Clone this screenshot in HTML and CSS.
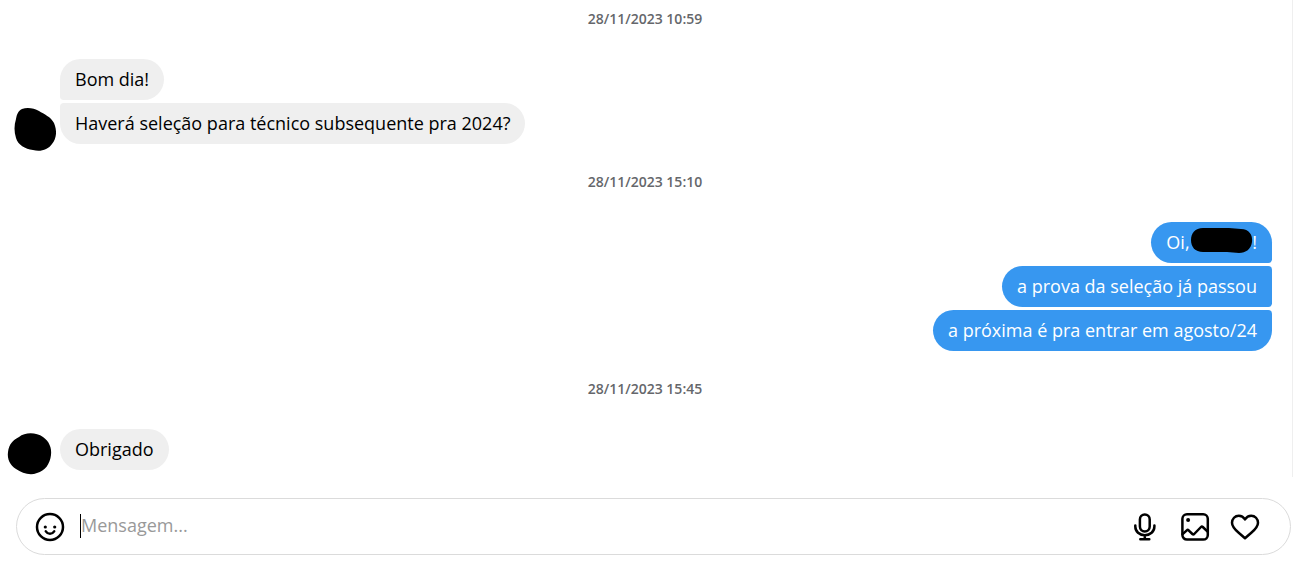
FILE: index.html
```html
<!DOCTYPE html>
<html lang="pt-BR">
<head>
    <meta charset="UTF-8">
    <meta name="viewport" content="width=device-width, initial-scale=1.0">
    <title>Mensagens</title>
    <link rel="stylesheet" href="styles.css">
</head>
<body>
    <main class="thread">
        <time class="stamp" datetime="2023-11-28T10:59">28/11/2023 10:59</time>
        <div class="group received">
            <svg class="avatar" viewBox="0 0 60 46" aria-hidden="true">
                <path d="M22 3C27 1 34 2 39 5C44 8 51 11 54 17C57 24 57 32 52 38C48 44 40 46 33 44C25 43 18 39 16 32C14 26 14 19 16 13C17 8 18 5 22 3Z"/>
            </svg>
            <div class="bubbles">
                <p class="bubble">Bom dia!</p>
                <p class="bubble">Haverá seleção para técnico subsequente pra 2024?</p>
            </div>
        </div>
        <time class="stamp" datetime="2023-11-28T15:10">28/11/2023 15:10</time>
        <div class="group sent">
            <div class="bubbles">
                <p class="bubble">Oi, <svg class="redacted" viewBox="0 0 62 26" aria-hidden="true"><path d="M12 1H38L50 2C58 2 62 8 61 15C60 22 55 26 48 26L36 25H12C4 25 0 20 0 13C0 6 4 1 12 1Z"/></svg>!</p>
                <p class="bubble">a prova da seleção já passou</p>
                <p class="bubble">a próxima é pra entrar em agosto/24</p>
            </div>
        </div>
        <time class="stamp" datetime="2023-11-28T15:45">28/11/2023 15:45</time>
        <div class="group received">
            <svg class="avatar" viewBox="0 0 60 46" aria-hidden="true">
                <path d="M19 5C25 0 36 0 43 5C49 9 52 16 51 23C50 32 45 39 37 41C30 44 22 41 16 37C10 33 7 27 8 20C9 12 13 8 19 5Z"/>
            </svg>
            <div class="bubbles">
                <p class="bubble">Obrigado</p>
            </div>
        </div>
    </main>
    <form class="composer">
        <button type="button" class="icon-button" aria-label="Escolher um emoji">
            <svg class="icon" viewBox="0 0 30 30">
                <circle cx="15" cy="15" r="13"/>
                <circle class="dot" cx="10.3" cy="15" r="1.6"/>
                <circle class="dot" cx="19.7" cy="15" r="1.6"/>
                <path d="M10.8 19.4C13 22.6 17 22.6 19.2 19.4"/>
            </svg>
        </button>
        <span class="caret"></span>
        <input class="message" type="text" placeholder="Mensagem..." aria-label="Mensagem">
        <button type="button" class="icon-button" aria-label="Clipe de voz">
            <svg class="icon" viewBox="0 0 30 30">
                <rect x="9.9" y="2.5" width="9.8" height="17" rx="4.9"/>
                <path d="M5.3 13.4V14.5C5.3 19.5 9.4 23.2 14.8 23.2S24.4 19.5 24.4 14.5V13.4M14.8 23.2V27.2M10.3 27.2H19.3"/>
            </svg>
        </button>
        <button type="button" class="icon-button" aria-label="Adicionar foto ou vídeo">
            <svg class="icon" viewBox="0 0 30 30">
                <rect x="2.4" y="2.2" width="25.4" height="25.4" rx="4.6"/>
                <circle class="dot" cx="8.1" cy="8.1" r="2"/>
                <path d="M2.6 22.2L6.8 18.3Q7.7 17.5 8.6 18.3L12.4 22Q13.3 22.8 14.2 22L21 15Q21.9 14.1 22.8 15L27.6 19.6"/>
            </svg>
        </button>
        <button type="button" class="icon-button" aria-label="Curtir">
            <svg class="icon" viewBox="0 0 30 30">
                <path d="M15 7.4C13.5 5 11.5 3.7 8.8 3.7C5 3.7 2 6.8 2 10.8C2 14.8 4.8 17.5 8.7 20.8L15 26.2L21.3 20.8C25.2 17.5 28 14.8 28 10.8C28 6.8 25 3.7 21.2 3.7C18.5 3.7 16.5 5 15 7.4Z"/>
            </svg>
        </button>
    </form>
</body>
</html>
```
FILE: styles.css
```css
* {
    box-sizing: border-box;
}
body {
    margin: 0;
    background-color: #fff;
    color: #000;
    font-family: 'Segoe UI', 'Open Sans', 'Noto Sans', sans-serif;
    font-size: 18px;
}
.thread {
    padding: 10px 20px 7px 0;
    border-right: 1px solid #efefef;
}
.stamp {
    display: block;
    margin: 29px -18px 31px 0;
    color: #65676b;
    font-size: 14px;
    font-weight: 600;
    line-height: 18px;
    text-align: center;
}
.stamp:first-child {
    margin-top: 0;
}
.group {
    display: flex;
    align-items: flex-end;
}
.bubbles {
    display: flex;
    flex-direction: column;
    align-items: flex-start;
    gap: 3px;
}
.sent {
    justify-content: flex-end;
}
.sent .bubbles {
    align-items: flex-end;
}
.avatar {
    flex: none;
    width: 60px;
    height: 46px;
    margin-bottom: -8px;
}
.bubble {
    margin: 0;
    padding: 8px 15px;
    border-radius: 22px;
    background-color: #efefef;
    line-height: 25px;
}
.sent .bubble {
    background-color: #3797f0;
    color: #fff;
}
.received .bubble:not(:last-child) {
    border-bottom-left-radius: 4px;
}
.received .bubble:not(:first-child) {
    border-top-left-radius: 4px;
}
.sent .bubble:not(:last-child) {
    border-bottom-right-radius: 4px;
}
.sent .bubble:not(:first-child) {
    border-top-right-radius: 4px;
}
.redacted {
    width: 62px;
    height: 26px;
    margin: -8px -1px 0 -3px;
    vertical-align: middle;
    fill: #000;
}
.composer {
    display: flex;
    align-items: center;
    gap: 20px;
    margin: 21px 2px 13px 16px;
    padding: 13px 30px 12px 18px;
    border: 1px solid #dbdbdb;
    border-radius: 29px;
}
.caret {
    width: 1px;
    height: 24px;
    margin: 0 -20px 2px -5px;
    background-color: #000;
}
.message {
    flex: 1;
    min-width: 0;
    padding: 0 0 4px;
    border: none;
    outline: none;
    background: none;
    color: #000;
    font: inherit;
}
.message::placeholder {
    color: #999;
}
.icon-button {
    display: flex;
    padding: 0;
    border: none;
    background: none;
    cursor: pointer;
}
.icon {
    width: 30px;
    height: 30px;
    fill: none;
    stroke: #000;
    stroke-width: 2.5;
    stroke-linecap: round;
    stroke-linejoin: round;
}
.icon .dot {
    fill: #000;
    stroke: none;
}
```
